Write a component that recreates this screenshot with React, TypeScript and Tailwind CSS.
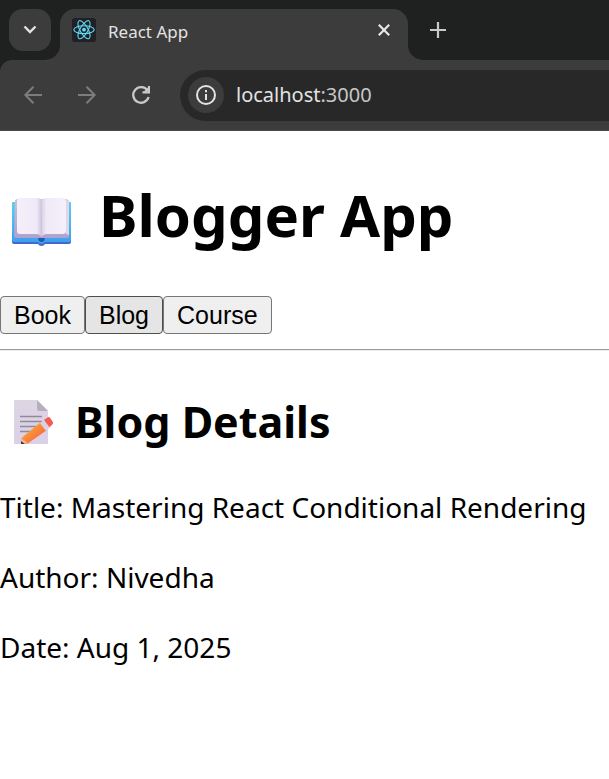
import { useState } from "react";

const tabs = ["Book", "Blog", "Course"];

function ReactLogo() {
  return (
    <svg viewBox="0 0 24 24" className="h-6 w-6 shrink-0" aria-hidden="true">
      <rect width="24" height="24" rx="3" fill="#202124" />
      <g fill="none" stroke="#61dafb" strokeWidth="1.1">
        <ellipse cx="12" cy="11.7" rx="10.2" ry="3.9" />
        <ellipse cx="12" cy="11.7" rx="10.2" ry="3.9" transform="rotate(60 12 11.7)" />
        <ellipse cx="12" cy="11.7" rx="10.2" ry="3.9" transform="rotate(120 12 11.7)" />
      </g>
      <circle cx="12" cy="11.7" r="1.9" fill="#61dafb" />
    </svg>
  );
}

function BookIcon() {
  return (
    <svg viewBox="0 0 59 48" className="mt-[14px] h-12 w-[59px] shrink-0" aria-hidden="true">
      <defs>
        <linearGradient id="cover" x1="0" y1="0" x2="0" y2="1">
          <stop offset="0" stopColor="#62cdf3" />
          <stop offset="0.85" stopColor="#3fa5f0" />
          <stop offset="1" stopColor="#3f9cf0" />
        </linearGradient>
        <linearGradient id="pageL" x1="0" x2="1">
          <stop offset="0" stopColor="#f4effa" />
          <stop offset="0.8" stopColor="#efeaf7" />
          <stop offset="1" stopColor="#cfc5dc" />
        </linearGradient>
        <linearGradient id="pageR" x1="0" x2="1">
          <stop offset="0" stopColor="#d9d0e5" />
          <stop offset="0.2" stopColor="#efeaf7" />
          <stop offset="1" stopColor="#f4effa" />
        </linearGradient>
        <linearGradient id="leaves" x1="0" y1="0" x2="0" y2="1">
          <stop offset="0" stopColor="#c9c6d0" />
          <stop offset="1" stopColor="#b0a0d0" />
        </linearGradient>
      </defs>
      <path d="M2 4H57Q59 4 59 6V44Q59 46 57 46H33Q32 48 29.500 48Q27 48 26 46H2Q0 46 0 44V6Q0 4 2 4Z" fill="#3b6ccb" />
      <path d="M2 4H57Q59 4 59 6V42Q59 44 57 44H33Q32 46 29.500 46Q27 46 26 44H2Q0 44 0 42V6Q0 4 2 4Z" fill="url(#cover)" />
      <path d="M26 40H33L32 43Q29.500 45 27 43Z" fill="#2857ad" />
      <path d="M3 3Q3 1 6 1H53Q57 1 57 4V39Q57 40 55 40H4Q2 40 2 38Z" fill="url(#leaves)" />
      <path d="M54 2Q57 2 57 5V37L54 36Z" fill="#ddd8e4" />
      <path d="M9 0H25Q29 0 29.500 3V39Q28 36 24 36H8Q5 36 5 33V4Q5 0 9 0Z" fill="url(#pageL)" />
      <path d="M34 0H50Q54 0 54 4V33Q54 36 51 36H35Q31 36 29.500 39V3Q30 0 34 0Z" fill="url(#pageR)" />
    </svg>
  );
}

function MemoIcon() {
  return (
    <svg viewBox="0 0 40 44" className="h-11 w-10 shrink-0" aria-hidden="true">
      <defs>
        <linearGradient id="sheet" x1="0" y1="0" x2="0" y2="1">
          <stop offset="0" stopColor="#dcd6e2" />
          <stop offset="1" stopColor="#dccfe8" />
        </linearGradient>
        <linearGradient id="pencil" x1="0" y1="0" x2="1" y2="1">
          <stop offset="0.3" stopColor="#f9a03a" />
          <stop offset="0.7" stopColor="#f9703c" />
        </linearGradient>
      </defs>
      <path d="M1 0H23L34 11V43Q34 44 33 44H1Q0 44 0 43V1Q0 0 1 0Z" fill="url(#sheet)" />
      <path d="M23 0L34 11H25Q23 11 23 9Z" fill="#b7adbf" />
      <path d="M6 16.500H28M6 21.500H28M6 26.500H24M6 31.500H18" stroke="#918a9a" strokeWidth="1.400" />
      <path d="M7 43L8 37.500L27 22L33 30L13 44Z" fill="url(#pencil)" />
      <path d="M7 44V38L14 43.500Z" fill="#e9bd9c" />
      <path d="M7 41L11 44H7Z" fill="#4a3544" />
      <path d="M26 23L30 20L36 27.500L32 31Z" fill="#d8d2e4" />
      <path d="M30 20L33.500 17.400Q35 16.500 36 17.800L38.800 22Q39.600 23.300 38.400 24.400L35.500 27.300Z" fill="#f95951" />
    </svg>
  );
}

function BrowserBar() {
  return (
    <header className="bg-[#1f2120]">
      <div className="flex h-[60px] items-start pt-[9px] pl-[9px]">
        <button aria-label="Search tabs" className="flex h-[42px] w-[42px] shrink-0 items-center justify-center rounded-[14px] bg-[#3c3c3c]">
          <svg viewBox="0 0 14 10" className="h-[10px] w-[14px]" fill="none" stroke="#e3e3e3" strokeWidth="2.400" aria-hidden="true">
            <path d="M1.500 1.500L7 7L12.500 1.500" />
          </svg>
        </button>
        <div className="relative ml-[9px] flex h-[51px] w-[348px] items-start rounded-t-[15px] bg-[#3c3c3c] pt-[9px] pr-4 pl-3">
          <svg viewBox="0 0 15 15" className="absolute bottom-0 -left-[15px] h-[15px] w-[15px]" fill="#3c3c3c" aria-hidden="true">
            <path d="M15 0V15H0A15 15 0 0 0 15 0Z" />
          </svg>
          <svg viewBox="0 0 15 15" className="absolute -right-[15px] bottom-0 h-[15px] w-[15px]" fill="#3c3c3c" aria-hidden="true">
            <path d="M0 0V15H15A15 15 0 0 1 0 0Z" />
          </svg>
          <ReactLogo />
          <span className="ml-3 grow text-[17px] leading-7 text-[#e3e3e3]">React App</span>
          <button aria-label="Close tab" className="flex h-6 w-4 items-center justify-center">
            <svg viewBox="0 0 12 12" className="h-3 w-3" stroke="#e8e8e8" strokeWidth="2.200" aria-hidden="true">
              <path d="M.8.8L11.200 11.200M11.200.8L.8 11.200" />
            </svg>
          </button>
        </div>
        <button aria-label="New tab" className="ml-[18px] flex h-[42px] w-6 items-center justify-center">
          <svg viewBox="0 0 16 16" className="h-4 w-4" stroke="#c9c9c9" strokeWidth="2.200" aria-hidden="true">
            <path d="M8 0V16M0 8H16" />
          </svg>
        </button>
      </div>
      <div className="flex h-[71px] items-center rounded-tl-xl border-b border-[#4a4a4a] bg-[#3c3c3c] pl-6">
        <button aria-label="Back" className="shrink-0">
          <svg viewBox="0 0 18 18" className="h-[18px] w-[18px]" fill="none" stroke="#7d7d7d" strokeWidth="2" aria-hidden="true">
            <path d="M18 9H1.500M9.500.8L1.300 9L9.500 17.200" />
          </svg>
        </button>
        <button aria-label="Forward" className="ml-9 shrink-0">
          <svg viewBox="0 0 18 18" className="h-[18px] w-[18px]" fill="none" stroke="#7d7d7d" strokeWidth="2" aria-hidden="true">
            <path d="M0 9H16.500M8.500.8L16.700 9L8.500 17.200" />
          </svg>
        </button>
        <button aria-label="Reload" className="ml-9 shrink-0">
          <svg viewBox="0 0 18 18" className="h-[18px] w-[18px]" fill="none" stroke="#c9c9c9" strokeWidth="2.300" aria-hidden="true">
            <path d="M15.500 4.500A7.800 7.800 0 1 0 16.600 11" />
            <path d="M17 0V6.300H10.500" />
            <path d="M16.500 2.500L13 6" />
          </svg>
        </button>
        <div className="ml-[30px] flex h-[51px] min-w-0 grow items-center rounded-l-full bg-[#282828] pl-2">
          <button aria-label="View site information" className="flex h-9 w-9 shrink-0 items-center justify-center rounded-full bg-[#3c3c3c]">
            <svg viewBox="0 0 20 20" className="h-5 w-5" fill="none" stroke="#e3e3e3" strokeWidth="2" aria-hidden="true">
              <circle cx="10" cy="10" r="9" />
              <path d="M10 9V15M10 5V7.200" />
            </svg>
          </button>
          <div className="ml-3 text-[20px] leading-7 text-[#e3e3e3]">
            localhost<span className="text-[#c7c7c7]">:3000</span>
          </div>
        </div>
      </div>
    </header>
  );
}

export default function App() {
  const [active, setActive] = useState("Blog");
  return (
    <div className="min-h-screen bg-white font-['Noto_Sans','Open_Sans',sans-serif] text-black">
      <BrowserBar />
      <main>
        <h1 className="mt-11 flex items-center pl-3 text-[58px] leading-20 font-bold">
          <BookIcon />
          <span className="ml-7">Blogger App</span>
        </h1>
        <nav className="mt-[41px] flex">
          {tabs.map((tab) => (
            <button
              key={tab}
              onClick={() => setActive(tab)}
              className={`h-[38px] rounded-[4px] border px-[13px] font-['Liberation_Sans',sans-serif] text-[25px] leading-9 ${
                active === tab ? "border-[#4f4f4f] bg-[#e5e5e5]" : "border-[#767676] bg-[#efefef]"
              }`}
            >
              {tab}
            </button>
          ))}
        </nav>
        <hr className="mt-[15px] h-[2px] border-t border-b border-t-[#9a9a9a] border-b-[#eeeeee]" />
        <section>
          <h2 className="mt-10 flex items-center pl-[14px] text-[43px] leading-[62px] font-bold">
            <MemoIcon />
            <span className="ml-[21px]">Blog Details</span>
          </h2>
          <div className="mt-[34px] flex flex-col gap-[30px] text-[28px] leading-10">
            <p>Title: Mastering React Conditional Rendering</p>
            <p>Author: Nivedha</p>
            <p>Date: Aug 1, 2025</p>
          </div>
        </section>
      </main>
    </div>
  );
}
